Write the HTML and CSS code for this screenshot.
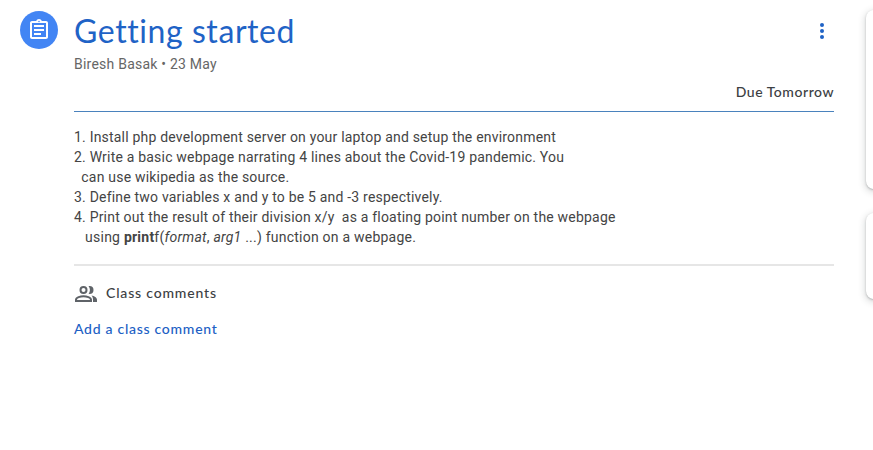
FILE: index.html
```html
<!DOCTYPE html>
<html lang="en">
<head>
<meta charset="utf-8">
<title>Getting started</title>
<link rel="stylesheet" href="styles.css">
</head>
<body>
<div class="page">
  <div class="badge">
    <svg width="24" height="24" viewBox="0 0 24 24" fill="#fff"><path d="M7 15h7v2H7zm0-4h10v2H7zm0-4h10v2H7z"/><path d="M19 3h-4.180C14.400 1.840 13.300 1 12 1c-1.300 0-2.400.84-2.820 2H5c-1.100 0-2 .9-2 2v14c0 1.100.9 2 2 2h14c1.100 0 2-.9 2-2V5c0-1.100-.9-2-2-2zm-7-.25c.41 0 .75.34.75.75s-.34.75-.75.75-.75-.34-.75-.75.34-.75.75-.75zM19 19H5V5h14v14z"/></svg>
  </div>
  <main class="main">
    <header class="header">
      <h1 class="title">Getting started</h1>
      <svg class="more" width="24" height="24" viewBox="0 0 24 24" fill="#1f63c6"><circle cx="12" cy="6" r="2"/><circle cx="12" cy="12" r="2"/><circle cx="12" cy="18" r="2"/></svg>
    </header>
    <div class="meta">Biresh Basak • 23 May</div>
    <div class="due">Due Tomorrow</div>
    <div class="body">
      <p>1. Install php development server on your laptop and setup the environment</p>
      <p>2. Write a basic webpage narrating 4 lines about the Covid-19 pandemic. You</p>
      <p>  can use wikipedia as the source.</p>
      <p>3. Define two variables x and y to be 5 and -3 respectively.</p>
      <p>4. Print out the result of their division x/y  as a floating point number on the webpage</p>
      <p class="signature">   using <b>print</b>f(<i>format</i>, <i>arg1</i> ...) function on a webpage.</p>
    </div>
    <section class="comments">
      <div class="heading">
        <svg width="24" height="24" viewBox="0 0 24 24" fill="none" stroke="#5f6368" stroke-width="2"><circle cx="9.500" cy="9" r="3"/><path d="M2 20v-1.200C2 16.500 6.500 15.300 9.500 15.300s7.500 1.200 7.500 3.500V20z"/><path fill="#5f6368" stroke="none" d="M14.500 5.150c.35-.1.700-.15 1-.15a4 4 0 0 1 0 8c-.3 0-.65-.05-1-.15.95-1.050 1.400-2.350 1.400-3.850s-.45-2.800-1.400-3.850zM17.500 14.600c2.800.6 5.500 1.900 5.500 4.200V21h-4v-2.200c0-1.800-.6-3.100-1.500-4.200z"/></svg>
        <span>Class comments</span>
      </div>
      <div class="add">Add a class comment</div>
    </section>
  </main>
  <aside class="side"><div class="card tall"></div><div class="card short"></div></aside>
</div>
</body>
</html>
```
FILE: styles.css
```css
* { box-sizing: border-box; }
body { margin: 0; background: #fff; font-family: Roboto, sans-serif; color: #3c4043; }
.page { display: flex; height: 450px; overflow: hidden; }
.badge { flex: none; width: 38px; height: 38px; margin: 11px 16px 0 20px; border-radius: 50%; background: #4285f4; display: flex; align-items: center; justify-content: center; }
.main { flex: none; width: 760px; }
.header { display: flex; justify-content: space-between; height: 54px; padding-top: 11px; }
.title { margin: 0; font: 400 32px/40px Lato, sans-serif; color: #1f63c6; letter-spacing: .58px; white-space: nowrap; }
.more { margin-top: 8px; }
.meta { height: 28px; font-size: 14px; line-height: 20px; letter-spacing: .23px; color: #666; }
.due { height: 30px; border-bottom: 1px solid #4a82bd; font: 500 14px/20px Lato, sans-serif; letter-spacing: .53px; text-align: right; }
.body { padding-top: 15px; height: 154px; border-bottom: 2px solid #e6e6e6; font-size: 14px; line-height: 20px; letter-spacing: .2px; color: #444; }
.body p { margin: 0; white-space: pre; }
.body .signature { letter-spacing: .23px; }
.heading { display: flex; align-items: center; gap: 8px; margin-top: 15px; height: 24px; font: 500 14px/20px Lato, sans-serif; letter-spacing: .82px; }
.add { margin-top: 14px; font: 500 14px/20px Lato, sans-serif; letter-spacing: .72px; color: #2060c4; }
.side { flex: none; width: 300px; margin-left: 32px; }
.card { border-radius: 8px; background: #fff; box-shadow: 0 1px 2px rgba(60,64,67,.3), 0 2px 6px 2px rgba(60,64,67,.15); }
.tall { margin-top: 10px; height: 179px; }
.short { margin-top: 24px; height: 86px; }
```
